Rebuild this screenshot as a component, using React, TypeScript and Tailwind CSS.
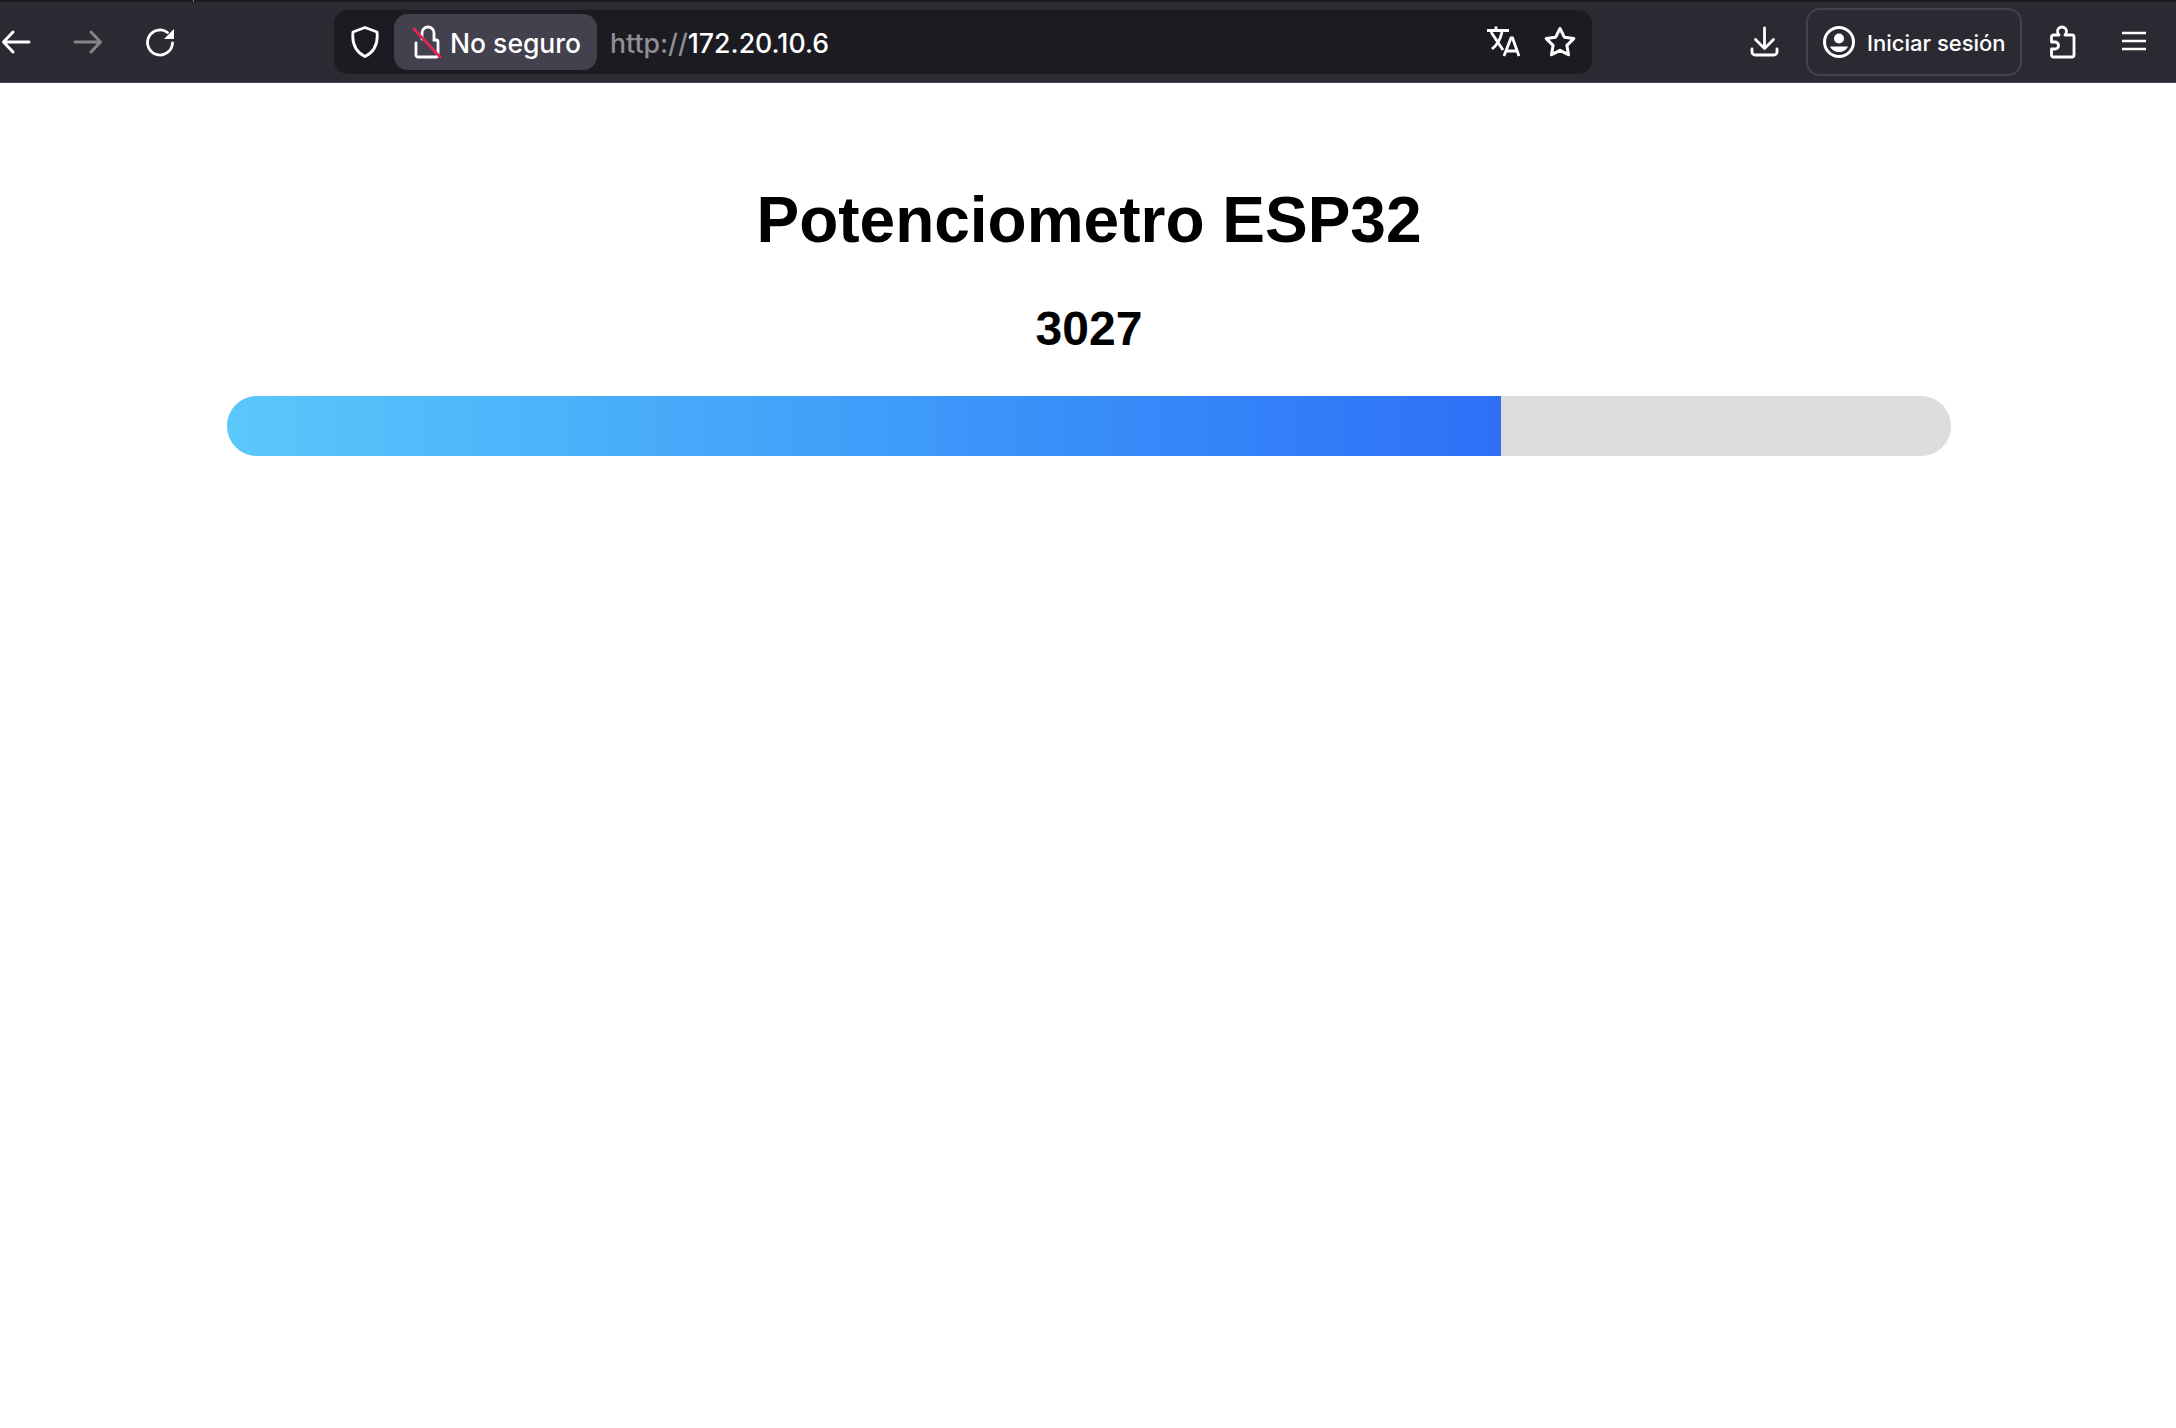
export default function App() {
  return (
    <div className="relative min-h-[1428px] bg-white font-['Liberation_Sans',sans-serif]">
      <header className="relative flex h-[83px] items-center border-t-2 border-b border-t-[#1c1b22] border-b-[#4a4952] bg-[#2b2a33] font-['Inter',sans-serif] text-white">
        <span className="absolute top-[-2px] left-[193px] h-[2px] w-px bg-[#77767e]" />
        <svg width="32" height="28" viewBox="0 0 32 28" className="shrink-0" fill="none" stroke="white" strokeWidth="3" strokeLinecap="round" strokeLinejoin="round"><path d="M29 14H4M13 4 3.500 14l9.500 10" /></svg>
        <svg width="32" height="28" viewBox="0 0 32 28" className="ml-[40px] shrink-0" fill="none" stroke="#85848a" strokeWidth="3" strokeLinecap="round" strokeLinejoin="round"><path d="M3 14h25M19 4l9.500 10-9.500 10" /></svg>
        <svg width="30" height="30" viewBox="0 0 30 30" className="ml-[41px] shrink-0" fill="none"><path d="M27.500 16a12.500 12.500 0 1 1-5-10.500" stroke="white" strokeWidth="2.800" strokeLinecap="round" /><path d="M29 2v10H19z" fill="white" /></svg>
        <div className="ml-[159px] flex h-[64px] w-[1258px] items-center rounded-[14px] bg-[#1c1b22]">
          <svg width="30" height="34" viewBox="0 0 30 34" className="ml-[16px] shrink-0" fill="none" stroke="white" strokeWidth="2.800" strokeLinejoin="round"><path d="M15 2.500 27 7c1 9-1 19-12 24.500C4 26 2 16 3 7z" /></svg>
          <div className="ml-[14px] flex h-[56px] w-[203px] items-center rounded-[14px] bg-[#42414d]">
            <svg width="30" height="34" viewBox="0 0 30 34" className="ml-[18px] shrink-0" fill="none"><path d="M10 14V8a6 6 0 0 1 12 0v7h2a2 2 0 0 1 2 2v13a2 2 0 0 1-2 2H6a2 2 0 0 1-2-2v-12" stroke="white" strokeWidth="2.800" strokeLinecap="round" /><path d="M2 4 28 32" stroke="#e22850" strokeWidth="2.800" strokeLinecap="round" /></svg>
            <span className="ml-[8px] pt-[2px] text-[26.500px] leading-none font-medium whitespace-nowrap">No seguro</span>
          </div>
          <span className="ml-[13px] pt-[2px] text-[26.700px] leading-none font-medium whitespace-nowrap"><span className="text-[#8f8f94]">http://</span>172.20.10.6</span>
          <svg width="34" height="34" viewBox="0 0 34 34" className="ml-auto shrink-0" fill="none" stroke="white" strokeWidth="2.800" strokeLinejoin="miter" strokeLinecap="butt"><path d="M1 5.500h22M10 1.500v4M5 7l12 18M16 7c-1.500 7-5 13-10 17" /><path d="M18 31l7-18h1.500L33 31M20.500 26h10" /></svg>
          <svg width="34" height="34" viewBox="0 0 34 34" className="ml-[23px] mr-[15px] shrink-0" fill="none" stroke="white" strokeWidth="3" strokeLinejoin="round"><path d="m17 3.500 4.300 8.700 9.500 1.400-6.900 6.700 1.600 9.400L17 25.300 8.500 29.700l1.600-9.400-6.900-6.700 9.500-1.400z" /></svg>
        </div>
        <svg width="30" height="32" viewBox="0 0 30 32" className="ml-[157px] shrink-0" fill="none" stroke="white" strokeWidth="2.800" strokeLinecap="round" strokeLinejoin="round"><path d="M15.500 2v20M6.500 13.500l9 9 9-9M3 23v3a3 3 0 0 0 3 3h19a3 3 0 0 0 3-3v-3" /></svg>
        <div className="ml-[27px] flex h-[68px] w-[216px] items-center rounded-[14px] border-2 border-[#42414d]">
          <svg width="34" height="34" viewBox="0 0 34 34" className="ml-[15px] shrink-0" fill="none"><circle cx="16" cy="17" r="14.500" stroke="white" strokeWidth="3" /><circle cx="16" cy="13.500" r="5" fill="white" /><path d="M7 21.500h18c-2 4-5.500 5.500-9 5.500s-7-1.500-9-5.500z" fill="white" /></svg>
          <span className="ml-[10px] pt-[1px] text-[22px] leading-none font-medium whitespace-nowrap">Iniciar sesión</span>
        </div>
        <svg width="30" height="34" viewBox="0 0 30 34" className="ml-[26px] shrink-0" fill="none" stroke="white" strokeWidth="2.800" strokeLinejoin="round"><path d="M3.500 12a2 2 0 0 1 2-2H11c-1-1-1.500-2-1.500-3.500a4.500 4.500 0 0 1 9 0c0 1.500-.5 2.500-1.500 3.500h7a2 2 0 0 1 2 2v18a2 2 0 0 1-2 2H5.500a2 2 0 0 1-2-2v-6H7a3.500 3.500 0 0 0 0-7H3.500z" /></svg>
        <svg width="26" height="22" viewBox="0 0 26 22" className="ml-[43px] shrink-0" stroke="white" strokeWidth="2.600" strokeLinecap="butt"><path d="M1 2h24M1 10h24M1 18h24" /></svg>
      </header>
      <main className="flex flex-col items-center pl-[2px]">
        <h1 className="mt-[97px] text-[64px] leading-[80px] font-bold text-black">Potenciometro ESP32</h1>
        <h2 className="mt-[39px] text-[48px] leading-[60px] font-bold text-black">3027</h2>
        <div className="mt-[37px] h-[60px] w-[1724px] overflow-hidden rounded-[30px] bg-[#dddddd]">
          <div className="h-full w-[73.9%] bg-gradient-to-r from-[#5ac8fa] to-[#2f6ff7]" />
        </div>
      </main>
    </div>
  );
}
